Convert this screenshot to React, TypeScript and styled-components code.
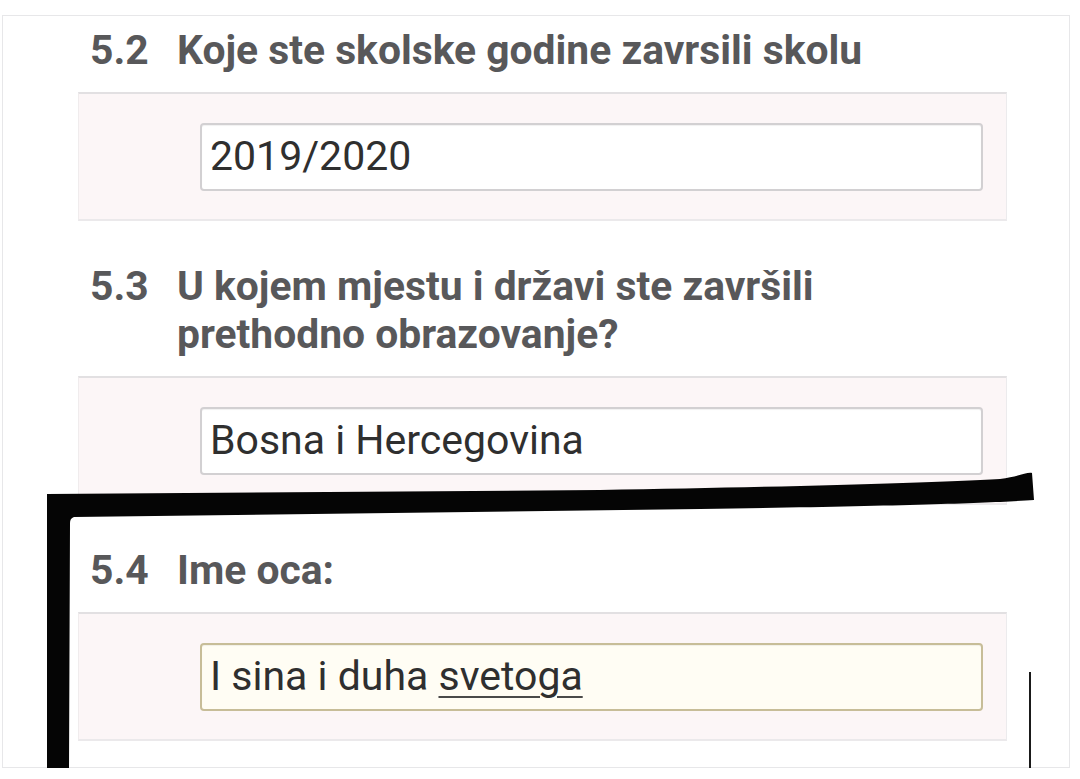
import React from "react";
import styled, { createGlobalStyle } from "styled-components";

const GlobalStyle = createGlobalStyle`
  html, body {
    margin: 0;
    padding: 0;
    background: #ffffff;
  }
  body {
    font-family: Roboto, "Noto Sans", "Liberation Sans", sans-serif;
  }
`;

const Page = styled.div`
  position: relative;
  width: 1080px;
  height: 779px;
  overflow: hidden;
  padding: 15px 0 0 2px;
  box-sizing: border-box;
  background: #ffffff;
`;

const Card = styled.div`
  width: 1068px;
  box-sizing: border-box;
  border: 1px solid #e7e7e9;
  padding: 0 0 26px 75px;
  background: #ffffff;
`;

const Section = styled.section<{ $first?: boolean }>`
  display: flex;
  flex-direction: column;
  gap: 18px;
  margin-top: ${(p) => (p.$first ? "10px" : "41px")};
`;

const Heading = styled.h2`
  display: grid;
  grid-template-columns: 87px 1fr;
  margin: 0;
  padding-left: 12px;
  font-family: Roboto, "Noto Sans", "Liberation Sans", sans-serif;
  font-weight: 700;
  font-size: 40.8px;
  line-height: 48px;
  color: #58585a;
`;

const Num = styled.span``;
const Question = styled.span``;

const Panel = styled.div`
  width: 929px;
  box-sizing: border-box;
  background: #fcf6f7;
  border-top: 2px solid #e2e0e2;
  border-bottom: 2px solid #ebe9eb;
  border-left: 1px solid #f0eced;
  border-right: 1px solid #ecebed;
  padding: 29px 23px 28px 121px;
`;

const Field = styled.div<{ $focused?: boolean }>`
  height: 68px;
  box-sizing: border-box;
  display: flex;
  align-items: center;
  padding: 0 0 2px 8px;
  border: 2px solid ${(p) => (p.$focused ? "#c7bd98" : "#d2d0d2")};
  border-radius: 4px;
  background: ${(p) => (p.$focused ? "#fffdf4" : "#ffffff")};
  box-shadow: inset 0 1px 1px rgba(0, 0, 0, 0.06);
  font-family: Roboto, "Noto Sans", "Liberation Sans", sans-serif;
  font-size: 41px;
  color: #2f2f2f;
  white-space: nowrap;
`;

const Misspelled = styled.span`
  text-decoration: underline;
  text-decoration-color: #4a4a4a;
  text-decoration-thickness: 2px;
  text-underline-offset: 6px;
`;

const Marker = styled.svg`
  position: absolute;
  left: 0;
  top: 0;
  pointer-events: none;
`;

export default function App() {
  return (
    <>
      <GlobalStyle />
      <Page>
        <Card>
          <Section $first>
            <Heading>
              <Num>5.2</Num>
              <Question>Koje ste skolske godine zavrsili skolu</Question>
            </Heading>
            <Panel>
              <Field>2019/2020</Field>
            </Panel>
          </Section>
          <Section>
            <Heading>
              <Num>5.3</Num>
              <Question>
                U kojem mjestu i državi ste završili
                <br />
                prethodno obrazovanje?
              </Question>
            </Heading>
            <Panel>
              <Field>Bosna i Hercegovina</Field>
            </Panel>
          </Section>
          <Section>
            <Heading>
              <Num>5.4</Num>
              <Question>Ime oca:</Question>
            </Heading>
            <Panel>
              <Field $focused>
                I sina i duha&nbsp;<Misspelled>svetoga</Misspelled>
              </Field>
            </Panel>
          </Section>
        </Card>
        <Marker width="1080" height="779" viewBox="0 0 1080 779">
          <path
            d="M47 494 L600 490 C780 487 930 483 1000 479 C1018 477 1026 472 1032 473 L1034 500 C990 503 900 506 700 509 L74 517 C71 518 70 520 70 523 L69 768 L47 768 Z"
            fill="#050505"
          />
          <path d="M1030 672 L1030 768" stroke="#1a1a1a" strokeWidth="2" />
        </Marker>
      </Page>
    </>
  );
}
